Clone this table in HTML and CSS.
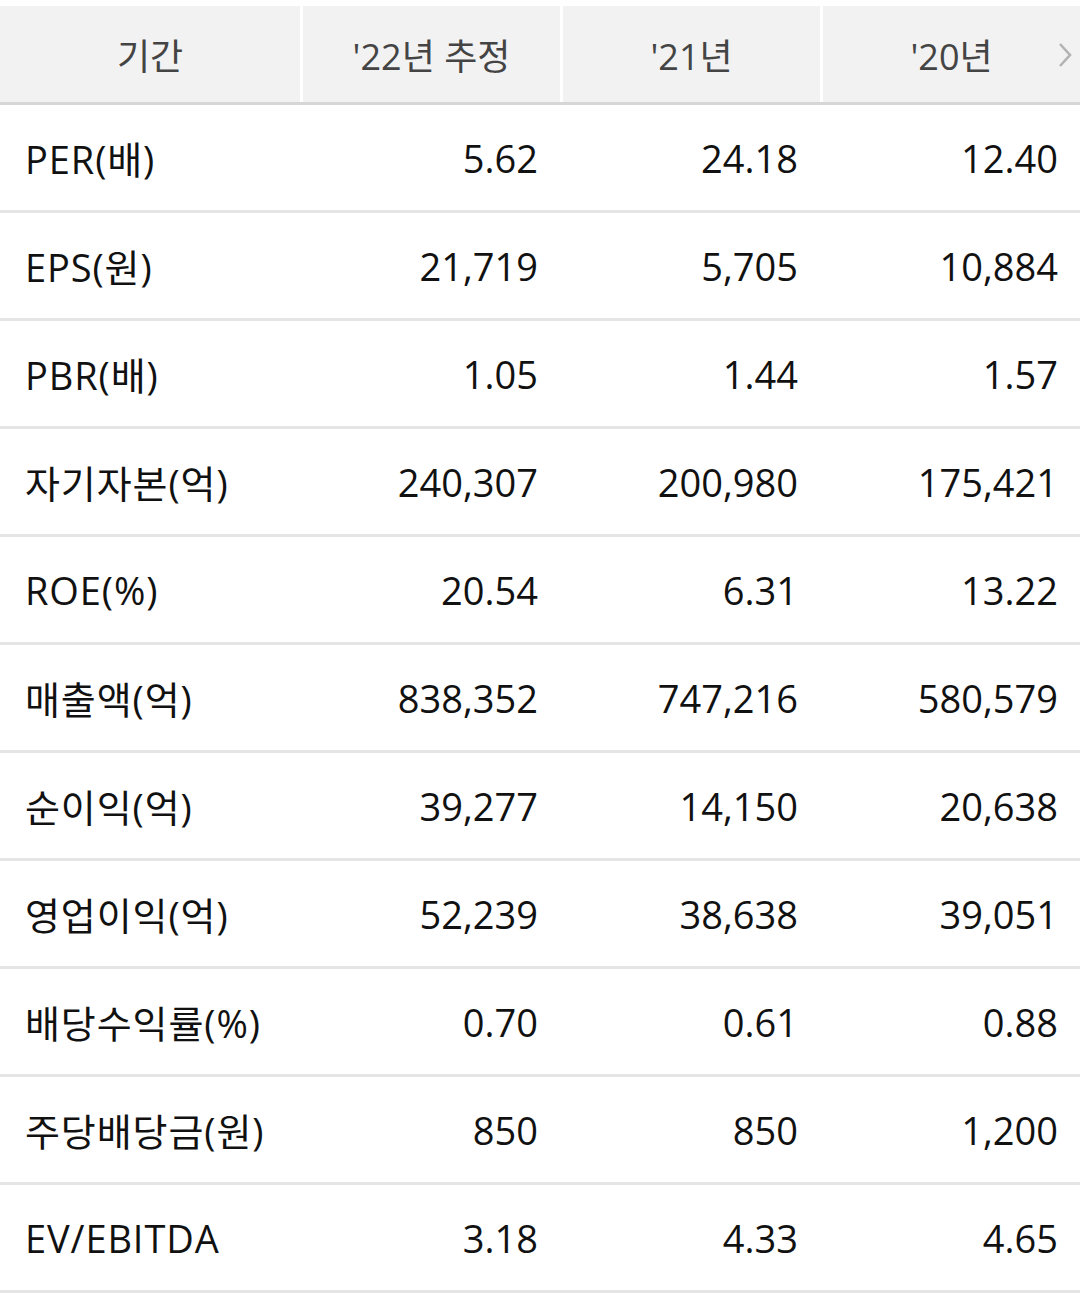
FILE: index.html
```html
<!DOCTYPE html>
<html lang="ko">
<head>
<meta charset="utf-8">
<link rel="stylesheet" href="styles.css">
</head>
<body>
<div class="table">
  <div class="head">
    <div class="hcell">기간</div>
    <div class="hcell">'22년 추정</div>
    <div class="hcell">'21년</div>
    <div class="hcell last">'20년
      <svg class="chev" width="16" height="28" viewBox="0 0 16 28"><path d="M3 3 L13 14 L3 25" fill="none" stroke="#b3b3b3" stroke-width="2.6"/></svg>
    </div>
  </div>
  <div class="row"><div class="label">PER(배)</div><div class="val">5.62</div><div class="val">24.18</div><div class="val">12.40</div></div>
  <div class="row"><div class="label">EPS(원)</div><div class="val">21,719</div><div class="val">5,705</div><div class="val">10,884</div></div>
  <div class="row"><div class="label">PBR(배)</div><div class="val">1.05</div><div class="val">1.44</div><div class="val">1.57</div></div>
  <div class="row"><div class="label">자기자본(억)</div><div class="val">240,307</div><div class="val">200,980</div><div class="val">175,421</div></div>
  <div class="row"><div class="label">ROE(%)</div><div class="val">20.54</div><div class="val">6.31</div><div class="val">13.22</div></div>
  <div class="row"><div class="label">매출액(억)</div><div class="val">838,352</div><div class="val">747,216</div><div class="val">580,579</div></div>
  <div class="row"><div class="label">순이익(억)</div><div class="val">39,277</div><div class="val">14,150</div><div class="val">20,638</div></div>
  <div class="row"><div class="label">영업이익(억)</div><div class="val">52,239</div><div class="val">38,638</div><div class="val">39,051</div></div>
  <div class="row"><div class="label">배당수익률(%)</div><div class="val">0.70</div><div class="val">0.61</div><div class="val">0.88</div></div>
  <div class="row"><div class="label">주당배당금(원)</div><div class="val">850</div><div class="val">850</div><div class="val">1,200</div></div>
  <div class="row"><div class="label">EV/EBITDA</div><div class="val">3.18</div><div class="val">4.33</div><div class="val">4.65</div></div>
</div>
</body>
</html>
```

FILE: styles.css
```css
html, body {
  margin: 0;
  padding: 0;
  background: #ffffff;
}
body {
  font-family: "Open Sans", "Noto Sans CJK KR", sans-serif;
  color: #111111;
}
.table {
  padding-top: 6px;
  width: 1080px;
}
.head {
  display: grid;
  grid-template-columns: 300px 1fr 1fr 1fr;
  column-gap: 3px;
  height: 96px;
  border-bottom: 3px solid #d6d6d6;
}
.hcell {
  background: #f2f2f2;
  display: flex;
  align-items: center;
  justify-content: center;
  font-size: 36px;
  color: #444444;
  position: relative;
}
.chev {
  position: absolute;
  right: 7px;
  top: 35px;
}
.row {
  display: grid;
  grid-template-columns: 300px 1fr 1fr 1fr;
  column-gap: 3px;
  height: 105px;
  border-bottom: 3px solid #e5e5e5;
  align-items: center;
  font-size: 38px;
}
.label {
  padding-left: 25px;
  letter-spacing: 0.9px;
}
.val {
  text-align: right;
  padding-right: 22px;
}
```
